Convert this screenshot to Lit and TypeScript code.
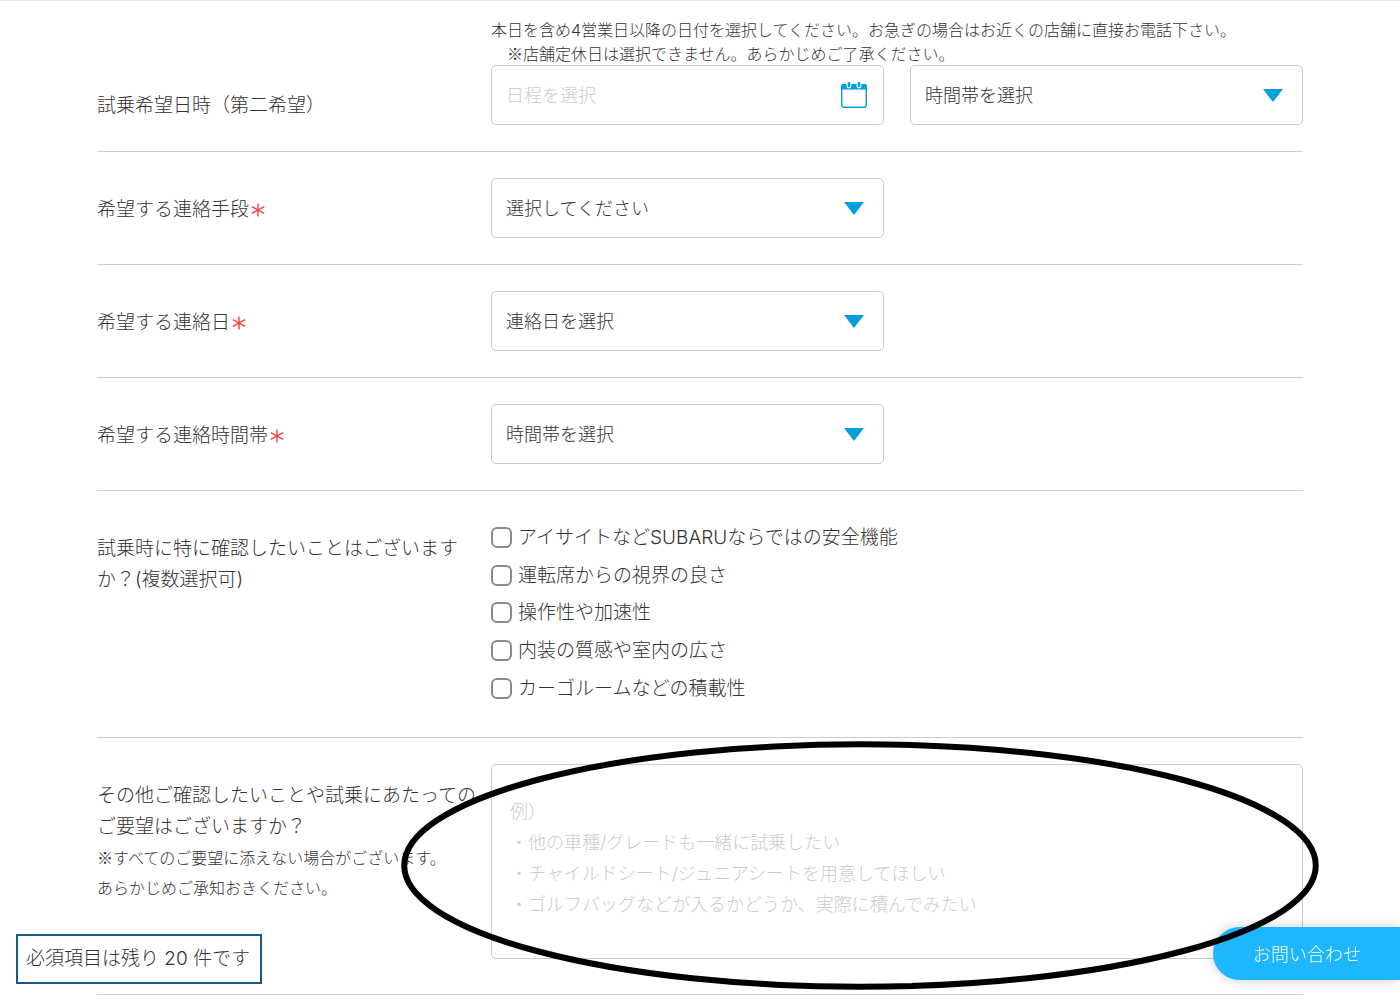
import { LitElement, html, css, svg, nothing } from "lit";
import { customElement } from "lit/decorators.js";

interface SelectRow {
  id: string;
  label: string;
  option: string;
}

const SELECT_ROWS: SelectRow[] = [
  { id: "contact-method", label: "希望する連絡手段", option: "選択してください" },
  { id: "contact-day", label: "希望する連絡日", option: "連絡日を選択" },
  { id: "contact-time", label: "希望する連絡時間帯", option: "時間帯を選択" },
];

const CHECKS = [
  "アイサイトなどSUBARUならではの安全機能",
  "運転席からの視界の良さ",
  "操作性や加速性",
  "内装の質感や室内の広さ",
  "カーゴルームなどの積載性",
];

const EXAMPLE = [
  "例）",
  "・他の車種/グレードも一緒に試乗したい",
  "・チャイルドシート/ジュニアシートを用意してほしい",
  "・ゴルフバッグなどが入るかどうか、実際に積んでみたい",
].join("\n");

const asterisk = html`<svg class="required" viewBox="0 0 14 14" role="img" aria-label="必須">
  <path d="M7 0.5V13.5M0.8 3.6L13.2 10.4M13.2 3.6L0.8 10.4" />
</svg>`;

const ring = (x: number) => svg`
  <rect x=${x - 2.4} y="-1" width="4.8" height="7.4" rx="2.4" fill="#fff" />
  <rect x=${x - 1.3} y="0" width="2.6" height="5.2" rx="1.3" fill="#00a0dc" />`;

const calendar = html`<svg class="calendar" viewBox="0 0 26 26" aria-hidden="true">
  <rect x="0.7" y="2.7" width="24.6" height="22.6" rx="2.4" fill="#fff" stroke="#00a0dc" stroke-width="1.4" />
  <path d="M0 7.4V4.5A2.5 2.5 0 0 1 2.5 2h21A2.5 2.5 0 0 1 26 4.5v2.9z" fill="#00a0dc" />
  ${ring(8)}${ring(18)}
</svg>`;

@customElement("app-root")
export class AppRoot extends LitElement {
  static styles = css`
    :host {
      display: block;
      color: #333;
      background: #fff;
      font-family: Inter, "Noto Sans CJK JP", sans-serif;
      font-size: 19px;
      font-weight: 300;
      line-height: 31px;
    }
    * {
      box-sizing: border-box;
    }
    .form {
      padding: 0 97px;
      border-top: 1px solid #e2e2e2;
    }
    .row {
      display: grid;
      grid-template-columns: 394px minmax(0, 1fr);
      padding: 26px 0;
      border-bottom: 1px solid #ccc;
    }
    .row.first {
      padding-top: 18px;
    }
    .row.last {
      padding-bottom: 35px;
    }
    .label {
      padding-top: 16px;
    }
    .first .label {
      align-self: end;
      padding: 0 0 4px;
    }
    .line {
      display: block;
    }
    .small {
      font-size: 16px;
    }
    .kome {
      font-family: "Noto Sans CJK JP", sans-serif;
    }
    .required {
      width: 14px;
      height: 14px;
      margin-left: 2px;
      vertical-align: -1px;
      fill: none;
      stroke: #e8483f;
      stroke-width: 1.4;
    }
    .note {
      margin: 0;
      font-size: 16px;
      line-height: 23px;
    }
    .note .kome {
      padding-left: 16px;
    }
    .pair {
      display: grid;
      grid-template-columns: 1fr 1fr;
      gap: 26px;
    }
    .box {
      display: grid;
      align-items: center;
    }
    .box > * {
      grid-area: 1 / 1;
    }
    .control {
      width: 100%;
      height: 60px;
      margin: 0;
      padding: 0 14px;
      appearance: none;
      border: 1px solid #ccc;
      border-radius: 5px;
      background: #fff;
      color: inherit;
      font: inherit;
      font-size: 18px;
    }
    .control::placeholder {
      color: #ccc;
      opacity: 1;
    }
    textarea.control {
      display: block;
      height: 195px;
      padding: 31px 18px;
      line-height: 31px;
      resize: none;
    }
    .arrow {
      justify-self: end;
      width: 20px;
      height: 13px;
      margin-right: 20px;
      fill: #00a0dc;
      pointer-events: none;
    }
    .calendar {
      justify-self: end;
      width: 26px;
      height: 26px;
      margin-right: 17px;
      pointer-events: none;
    }
    .checks {
      display: grid;
      grid-auto-rows: 1fr;
      min-height: 194px;
      margin: 0;
      padding: 2px 0 4px;
      list-style: none;
    }
    .check {
      display: flex;
      align-items: center;
      gap: 6px;
    }
    .tick {
      flex: none;
      width: 21px;
      height: 21px;
      margin: 0;
      appearance: none;
      border: 2px solid #8a8a8a;
      border-radius: 6px;
      background: #fff;
    }
    .tick:checked {
      background: #00a0dc;
    }
    .marked {
      position: relative;
    }
    .ellipse {
      position: absolute;
      z-index: 3;
      top: -23px;
      left: -90px;
      width: calc(100% + 106px);
      height: 249px;
      pointer-events: none;
    }
    .remaining {
      position: fixed;
      z-index: 1;
      left: 16px;
      bottom: 16px;
      padding: 8px 10px 8px 8px;
      border: 2px solid #1c5790;
      background: #fff;
      line-height: 30px;
    }
    .contact {
      position: fixed;
      z-index: 2;
      right: 0;
      bottom: 20px;
      padding: 12px 39px 10px 40px;
      border-radius: 27px 0 0 27px;
      background: #1eb7ff;
      box-shadow: 0 0 12px rgba(0, 0, 0, 0.2);
      color: #fff;
      font-size: 18px;
      text-decoration: none;
    }
  `;

  private dropdown(id: string, option: string, name?: string) {
    return html`<div class="box">
      <select class="control" id=${id} aria-label=${name ?? nothing}>
        <option>${option}</option>
      </select>
      <svg class="arrow" viewBox="0 0 20 13" aria-hidden="true"><path d="M0 0H20L10 13z" /></svg>
    </div>`;
  }

  render() {
    return html`
      <form class="form">
        <div class="row first">
          <label class="label" for="date2">試乗希望日時（第二希望）</label>
          <div>
            <p class="note">
              <span class="line">本日を含め4営業日以降の日付を選択してください。お急ぎの場合はお近くの店舗に直接お電話下さい。</span>
              <span class="line kome">※店舗定休日は選択できません。あらかじめご了承ください。</span>
            </p>
            <div class="pair">
              <div class="box">
                <input class="control" id="date2" type="text" placeholder="日程を選択" />
                ${calendar}
              </div>
              ${this.dropdown("time2", "時間帯を選択", "時間帯")}
            </div>
          </div>
        </div>
        ${SELECT_ROWS.map(
          (r) => html`<div class="row">
            <label class="label" for=${r.id}>${r.label}${asterisk}</label>
            <div class="pair">${this.dropdown(r.id, r.option)}</div>
          </div>`
        )}
        <div class="row" role="group" aria-labelledby="checks-label">
          <div class="label" id="checks-label">
            <span class="line">試乗時に特に確認したいことはございます</span>
            <span class="line">か？(複数選択可)</span>
          </div>
          <ul class="checks">
            ${CHECKS.map(
              (c) => html`<li class="check">
                <label class="check"><input class="tick" type="checkbox" />${c}</label>
              </li>`
            )}
          </ul>
        </div>
        <div class="row last">
          <label class="label" for="requests">
            <span class="line">その他ご確認したいことや試乗にあたっての</span>
            <span class="line">ご要望はございますか？</span>
            <span class="line small kome">※すべてのご要望に添えない場合がございます。</span>
            <span class="line small">あらかじめご承知おきください。</span>
          </label>
          <div class="marked">
            <textarea class="control" id="requests" placeholder=${EXAMPLE}></textarea>
            <svg class="ellipse" aria-hidden="true">
              <ellipse cx="50%" cy="50%" rx="49.65%" ry="48.7%" fill="none" stroke="#000" stroke-width="6" />
            </svg>
          </div>
        </div>
      </form>
      <div class="remaining" role="status">必須項目は残り 20 件です</div>
      <a class="contact" href="#contact">お問い合わせ</a>
    `;
  }
}
